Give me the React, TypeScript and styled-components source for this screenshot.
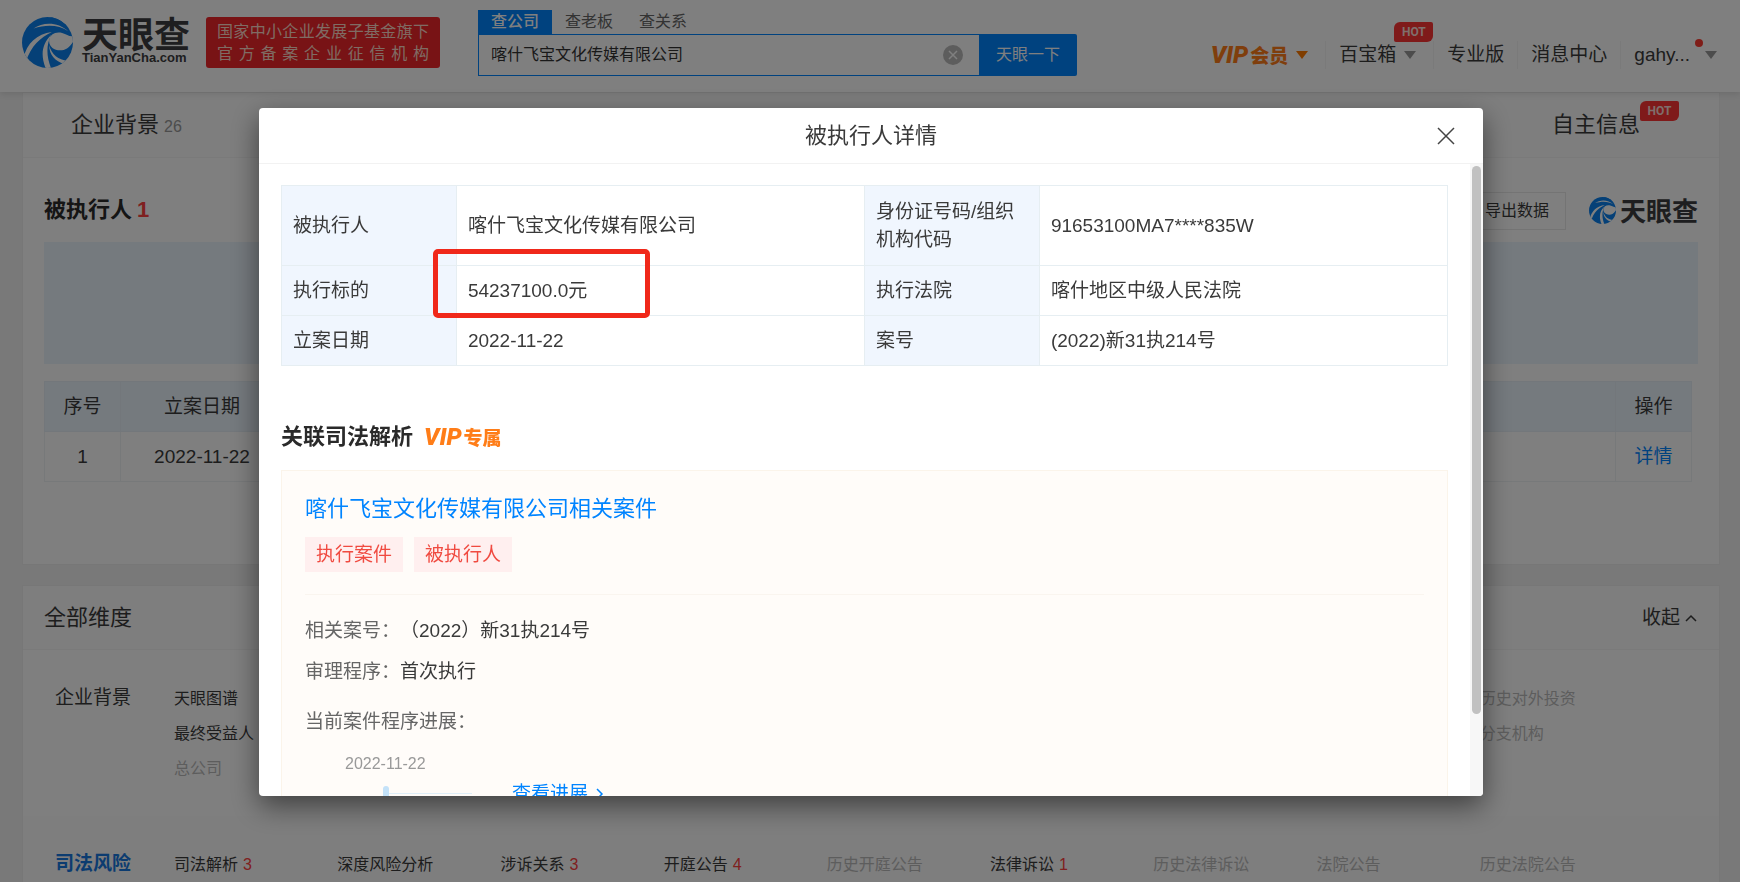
import React from "react";
import styled, { createGlobalStyle, css } from "styled-components";

const GlobalStyle = createGlobalStyle`
  * { box-sizing: border-box; }
  html, body, #root { height: 100%; }
  body {
    margin: 0;
    overflow: hidden;
    background: #f2f2f2;
    color: #3a3a3a;
    font: 19px/28px "Liberation Sans", "Noto Sans CJK SC", sans-serif;
  }
  a { color: inherit; text-decoration: none; }
  button, input { font: inherit; color: inherit; }
  h1, h2, h3, p, ul, dl, dd { margin: 0; padding: 0; font-weight: inherit; font-size: inherit; }
  ul { list-style: none; }
`;

/* ---------- header ---------- */

const Header = styled.header`
  position: relative;
  display: flex;
  align-items: flex-start;
  height: 92px;
  padding: 0 19px 0 22px;
  background: #fff;
  box-shadow: 0 2px 6px rgba(0, 0, 0, 0.1);
`;

const Brand = styled.a`
  display: flex;
  gap: 9px;
  padding-top: 17px;
`;

const BrandText = styled.span`
  display: flex;
  flex-direction: column;
  color: #3c3c40;
`;

const WordMark = styled.span<{ $small?: boolean }>`
  font-family: "Noto Sans CJK SC", sans-serif;
  font-weight: 700;
  color: #3c3c40;
  font-size: ${(p) => (p.$small ? 26 : 36)}px;
  line-height: ${(p) => (p.$small ? 26 : 31)}px;
`;

const Domain = styled.span`
  font-size: 13px;
  font-weight: 700;
  line-height: 20px;
`;

const Banner = styled.div`
  width: 234px;
  height: 51px;
  margin: 17px 0 0 16px;
  padding: 4px 11px;
  border-radius: 3px;
  background: #f0262b;
  color: #ffd8c8;
  font-size: 16px;
  line-height: 22px;
`;

const BannerLine = styled.div`
  text-align: justify;
  text-align-last: justify;
  text-justify: inter-character;
  white-space: nowrap;
`;

const Search = styled.form`
  margin: 10px 0 0 38px;
  width: 599px;
  font-size: 16px;
`;

const SearchTabs = styled.div`
  display: flex;
`;

const SearchTab = styled.button<{ $active?: boolean }>`
  height: 24px;
  padding: 0 13px;
  border: 0;
  background: ${(p) => (p.$active ? "#0084ff" : "transparent")};
  color: ${(p) => (p.$active ? "#fff" : "#666")};
  font-weight: ${(p) => (p.$active ? 500 : 400)};
  line-height: 24px;
`;

const SearchBar = styled.div`
  display: flex;
  height: 42px;
`;

const SearchField = styled.label`
  display: flex;
  flex: 1;
  align-items: center;
  padding: 0 16px 0 12px;
  border: 1px solid #0084ff;
  border-right: 0;
`;

const SearchInput = styled.input`
  flex: 1;
  min-width: 0;
  padding: 0;
  border: 0;
  outline: 0;
  background: transparent;
  color: #333;
`;

const ClearButton = styled.button`
  display: flex;
  padding: 0;
  border: 0;
  background: transparent;
`;

const SearchSubmit = styled.button`
  width: 98px;
  padding: 0;
  border: 0;
  border-radius: 0 2px 2px 0;
  background: #0084ff;
  color: #fff;
`;

const Nav = styled.nav`
  display: flex;
  align-items: center;
  margin: 41px 0 0 auto;
`;

const NavItem = styled.a`
  position: relative;
  display: flex;
  align-items: center;
  padding: 0 13px;
  white-space: nowrap;
  & + & { border-left: 1px solid #f4f4f4; }
  &:last-child { padding-right: 0; }
  line-height: 28px;
`;

const UserName = styled.span`
  margin-right: 7px;
`;

const Caret = styled.i<{ $orange?: boolean }>`
  margin: 0 4px 0 8px;
  border: 6px solid transparent;
  border-top: 8px solid ${(p) => (p.$orange ? "#ff7a00" : "#999")};
  border-bottom: 0;
`;

const Vip = styled.span`
  display: inline-flex;
  align-items: baseline;
  gap: 2px;
  color: #ff7d18;
  font: 900 19px/28px "Noto Sans CJK SC", sans-serif;
`;

const VipLatin = styled.span`
  font: italic 900 24px/28px Roboto, sans-serif;
`;

const HotBadge = styled.span`
  position: absolute;
  left: 100%;
  top: -10px;
  width: 39px;
  height: 20px;
  border-radius: 6px 2px 6px 2px;
  background: #ff3535;
  color: #ffdcd8;
  font: 700 12px/20px Roboto, sans-serif;
  text-align: center;
`;

const NavHot = styled(HotBadge)`
  left: auto;
  right: 0;
  top: -19px;
`;

const UserDot = styled.i`
  position: absolute;
  right: 18px;
  top: -2px;
  width: 8px;
  height: 8px;
  border-radius: 50%;
  background: #ff3b30;
`;

/* ---------- page ---------- */

const Card = styled.section`
  margin: 0 20px 20px 22px;
  border: 1px solid #efefef;
  background: #fff;
`;

const TabStrip = styled.div`
  display: flex;
  justify-content: space-between;
  height: 65px;
  padding: 18px 79px 0 48px;
  border-bottom: 1px solid #f5f5f5;
  background: #fcfcfc;
  font-size: 22px;
`;

const StripTab = styled.a`
  position: relative;
`;

const Muted = styled.span`
  margin-left: 5px;
  color: #999;
  font-size: 16px;
`;

const RiskBlock = styled.div`
  padding: 32px 21px 82px;
`;

const BlockHead = styled.div`
  display: flex;
  align-items: center;
  height: 40px;
`;

const BlockTitle = styled.h2`
  font-size: 22px;
  font-weight: 700;
  color: #2a2a2a;
`;

const Count = styled.span`
  margin-left: 5px;
  color: #ff4040;
`;

const ExportButton = styled.button`
  align-self: flex-end;
  height: 38px;
  margin-left: auto;
  padding: 0 16px;
  border: 1px solid #e8e8e8;
  background: #fff;
  font-size: 16px;
`;

const SmallBrand = styled.span`
  display: flex;
  align-items: center;
  gap: 4px;
  margin-left: 23px;
`;

const Filler = styled.div`
  height: 122px;
  margin: 12px 0 17px;
  background: #ebf4fc;
`;

const ListTable = styled.table`
  width: calc(100% - 6px);
  border-collapse: collapse;
  table-layout: fixed;
  th, td {
    height: 50px;
    padding: 0;
    border: 1px solid #eff2f4;
    font-weight: 400;
    text-align: center;
  }
  th { background: #ebf4fc; border-color: #e6eff6; }
`;

const Link = styled.a`
  color: #0084ff;
`;

const DimHead = styled.div`
  display: flex;
  align-items: center;
  justify-content: space-between;
  height: 64px;
  padding: 0 22px 0 21px;
  border-bottom: 1px solid #f5f5f5;
  background: #fcfcfc;
`;

const DimTitle = styled.h2`
  font-size: 22px;
`;

const CollapseButton = styled.button`
  display: flex;
  align-items: center;
  gap: 5px;
  padding: 0;
  border: 0;
  background: transparent;
`;

const DimGroup = styled.div<{ $shade?: boolean }>`
  display: flex;
  padding: 30px 0;
  min-height: 166px;
  background: ${(p) => (p.$shade ? "#fcfcfc" : "#fff")};
`;

const DimName = styled.h3<{ $active?: boolean }>`
  width: 151px;
  padding-left: 32px;
  line-height: 36px;
  ${(p) =>
    p.$active &&
    css`
      color: #1879e0;
      font-weight: 700;
    `}
`;

const DimGrid = styled.ul`
  display: grid;
  flex: 1;
  grid-template-columns: repeat(9, 163fr) 76fr;
  grid-auto-rows: 35px;
  font-size: 16px;
  line-height: 38px;
  white-space: nowrap;
`;

const DimItem = styled.li<{ $col: number; $off?: boolean }>`
  grid-column: ${(p) => p.$col};
  color: ${(p) => (p.$off ? "#bbb" : "#3a3a3a")};
`;

/* ---------- dialog ---------- */

const Overlay = styled.div`
  position: fixed;
  inset: 0;
  display: flex;
  align-items: flex-start;
  justify-content: center;
  padding: 108px 0 0 2px;
  background: rgba(0, 0, 0, 0.5);
`;

const Dialog = styled.section`
  display: flex;
  flex-direction: column;
  width: 1224px;
  max-width: 92vw;
  height: 78vh;
  border-radius: 4px;
  overflow: hidden;
  background: #fff;
  box-shadow: 0 10px 28px rgba(0, 0, 0, 0.5);
`;

const DialogHead = styled.header`
  display: grid;
  flex: none;
  grid-template-columns: 1fr auto 1fr;
  align-items: center;
  height: 56px;
  padding: 0 28px;
  border-bottom: 1px solid #f2f2f2;
`;

const DialogTitle = styled.h1`
  grid-column: 2;
  font-size: 22px;
`;

const CloseButton = styled.button`
  display: flex;
  justify-self: end;
  padding: 0;
  border: 0;
  background: transparent;
`;

const DialogMain = styled.div`
  display: flex;
  flex: 1;
  min-height: 0;
`;

const DialogBody = styled.div`
  flex: 1;
  overflow: hidden;
  padding: 21px 22px 0;
`;

const ScrollTrack = styled.div`
  width: 13px;
  padding: 2px 2px 0;
  background: #f7f7f7;
`;

const ScrollThumb = styled.div`
  height: 87%;
  border-radius: 5px;
  background: #c1c1c1;
`;

const DetailWrap = styled.div`
  position: relative;
`;

const DetailTable = styled.table`
  width: 100%;
  border-collapse: collapse;
  table-layout: fixed;
  th, td {
    height: 50px;
    padding: 0 11px;
    border: 1px solid #e6eef2;
    font-weight: 400;
    text-align: left;
  }
  th {
    width: 15%;
    background: #f0f6fe;
  }
  tr:first-child > * { height: 80px; }
`;

const Highlight = styled.div`
  position: absolute;
  left: 152px;
  top: 64px;
  width: 217px;
  height: 69px;
  border: 5px solid #f0281a;
  border-radius: 5px;
`;

const RelatedHead = styled.div`
  display: flex;
  align-items: center;
  gap: 11px;
  margin: 57px 0 19px;
`;

const CaseCard = styled.article`
  padding: 24px 23px;
  border: 1px solid #fbf4ea;
  background: #fffcf9;
`;

const CaseTitle = styled.a`
  display: block;
  color: #0084ff;
  font-size: 22px;
`;

const Tags = styled.div`
  display: flex;
  gap: 11px;
  padding: 14px 0 22px;
  border-bottom: 1px solid #faf5ef;
`;

const Tag = styled.span`
  padding: 0 11px;
  background: #ffefef;
  color: #f04a40;
  line-height: 35px;
`;

const Facts = styled.dl`
  display: grid;
  grid-template-columns: auto 1fr;
  grid-auto-rows: 41px;
  padding-top: 15px;
  line-height: 41px;
`;

const Term = styled.dt`
  color: #666;
`;

const ProgressLabel = styled.p`
  margin-top: 16px;
  color: #666;
`;

const Timeline = styled.div`
  display: flex;
  gap: 40px;
  margin: 18px 0 0 40px;
`;

const Step = styled.div`
  width: 127px;
  color: #999;
  font-size: 16px;
  line-height: 20px;
`;

const Rail = styled.div`
  display: flex;
  align-items: center;
  margin: 12px 0 0 38px;
  &::before {
    content: "";
    width: 6px;
    height: 14px;
    border-radius: 3px;
    background: #c4e2f9;
  }
  &::after {
    content: "";
    flex: 1;
    height: 1px;
    background: #e0eff9;
  }
`;

const ProgressLink = styled.a`
  display: flex;
  align-items: center;
  gap: 6px;
  margin-top: 26px;
  color: #0084ff;
`;

const LogoMark = ({ size }: { size: number }) => (
  <svg width={size} height={size} viewBox="0 0 150 150" aria-hidden="true">
    <defs>
      <clipPath id={`disc${size}`}>
        <circle cx="75" cy="75" r="75" />
      </clipPath>
    </defs>
    <g clipPath={`url(#disc${size})`}>
      <rect width="150" height="150" fill="#0a80ee" />
      <path d="M152 56C140 60 132 50 118 47C98 42 82 52 80 68C78 86 94 98 112 98C128 98 140 90 152 70Z" fill="#fff" />
      <path d="M36 32C64 8 108 8 138 34C146 42 150 50 152 60L160 40L120 -10C100 -4 60 4 36 32Z" fill="#0a80ee" />
      <path d="M34 34C62 14 106 14 136 42C108 22 70 22 34 34Z" fill="#fff" />
      <path d="M4 122C14 76 44 50 88 44C54 60 26 86 12 130Z" fill="#fff" />
      <path d="M70 152C54 112 58 80 86 52C70 84 72 118 86 152Z" fill="#fff" />
      <path d="M80 82C86 110 108 126 134 128L124 138C98 130 80 112 80 82Z" fill="#fff" />
    </g>
  </svg>
);

const ChevronIcon = ({ up }: { up?: boolean }) => (
  <svg width="12" height="12" viewBox="0 0 12 12" fill="none" stroke="currentColor" strokeWidth="1.5" aria-hidden="true">
    <path d={up ? "M1 9L6 4L11 9" : "M3 1L8 6L3 11"} />
  </svg>
);

type Dim = { label: string; col: number; count?: number; off?: boolean };

const background: Dim[] = [
  { label: "天眼图谱", col: 1 },
  { label: "历史对外投资", col: 9, off: true },
  { label: "最终受益人", col: 1 },
  { label: "分支机构", col: 9, off: true },
  { label: "总公司", col: 1, off: true },
];

const judicial: Dim[] = [
  { label: "司法解析", col: 1, count: 3 },
  { label: "深度风险分析", col: 2 },
  { label: "涉诉关系", col: 3, count: 3 },
  { label: "开庭公告", col: 4, count: 4 },
  { label: "历史开庭公告", col: 5, off: true },
  { label: "法律诉讼", col: 6, count: 1 },
  { label: "历史法律诉讼", col: 7, off: true },
  { label: "法院公告", col: 8, off: true },
  { label: "历史法院公告", col: 9, off: true },
];

const Dimensions = ({ items }: { items: Dim[] }) => (
  <DimGrid>
    {items.map((d) => (
      <DimItem key={d.label} $col={d.col} $off={d.off}>
        <a href="#">{d.label}</a>
        {d.count !== undefined && <Count>{d.count}</Count>}
      </DimItem>
    ))}
  </DimGrid>
);

const details = [
  ["被执行人", "喀什飞宝文化传媒有限公司", "身份证号码/组织机构代码", "91653100MA7****835W"],
  ["执行标的", "54237100.0元", "执行法院", "喀什地区中级人民法院"],
  ["立案日期", "2022-11-22", "案号", "(2022)新31执214号"],
];

export default function App() {
  return (
    <div lang="zh-CN">
      <GlobalStyle />
      <Header>
        <Brand href="#">
          <LogoMark size={51} />
          <BrandText>
            <WordMark>天眼查</WordMark>
            <Domain>TianYanCha.com</Domain>
          </BrandText>
        </Brand>
        <Banner>
          <BannerLine>国家中小企业发展子基金旗下</BannerLine>
          <BannerLine>官方备案企业征信机构</BannerLine>
        </Banner>
        <Search onSubmit={(e) => e.preventDefault()}>
          <SearchTabs>
            <SearchTab type="button" $active>查公司</SearchTab>
            <SearchTab type="button">查老板</SearchTab>
            <SearchTab type="button">查关系</SearchTab>
          </SearchTabs>
          <SearchBar>
            <SearchField>
              <SearchInput aria-label="查公司" defaultValue="喀什飞宝文化传媒有限公司" />
              <ClearButton type="button" aria-label="清除">
                <svg width="20" height="20" viewBox="0 0 20 20" aria-hidden="true">
                  <circle cx="10" cy="10" r="10" fill="#bbb" />
                  <path d="M6 6L14 14M14 6L6 14" stroke="#fff" strokeWidth="1.5" />
                </svg>
              </ClearButton>
            </SearchField>
            <SearchSubmit type="submit">天眼一下</SearchSubmit>
          </SearchBar>
        </Search>
        <Nav>
          <NavItem href="#">
            <Vip><VipLatin>VIP</VipLatin>会员</Vip>
            <Caret $orange />
          </NavItem>
          <NavItem href="#">
            百宝箱
            <Caret />
            <NavHot>HOT</NavHot>
          </NavItem>
          <NavItem href="#">专业版</NavItem>
          <NavItem href="#">消息中心</NavItem>
          <NavItem href="#">
            <UserName>gahy...</UserName>
            <UserDot />
            <Caret />
          </NavItem>
        </Nav>
      </Header>

      <main>
        <Card>
          <TabStrip>
            <StripTab href="#">企业背景<Muted>26</Muted></StripTab>
            <StripTab href="#">自主信息<HotBadge>HOT</HotBadge></StripTab>
          </TabStrip>
          <RiskBlock>
            <BlockHead>
              <BlockTitle>被执行人<Count>1</Count></BlockTitle>
              <ExportButton>导出数据</ExportButton>
              <SmallBrand>
                <LogoMark size={27} />
                <WordMark $small>天眼查</WordMark>
              </SmallBrand>
            </BlockHead>
            <Filler />
            <ListTable>
              <colgroup>
                <col width="76" />
                <col width="163" />
                <col />
                <col width="76" />
              </colgroup>
              <thead>
                <tr><th>序号</th><th>立案日期</th><th /><th>操作</th></tr>
              </thead>
              <tbody>
                <tr><td>1</td><td>2022-11-22</td><td /><td><Link href="#">详情</Link></td></tr>
              </tbody>
            </ListTable>
          </RiskBlock>
        </Card>

        <Card>
          <DimHead>
            <DimTitle>全部维度</DimTitle>
            <CollapseButton>收起<ChevronIcon up /></CollapseButton>
          </DimHead>
          <DimGroup>
            <DimName>企业背景</DimName>
            <Dimensions items={background} />
          </DimGroup>
          <DimGroup $shade>
            <DimName $active>司法风险</DimName>
            <Dimensions items={judicial} />
          </DimGroup>
        </Card>
      </main>

      <Overlay>
        <Dialog role="dialog" aria-modal="true" aria-labelledby="detail-title">
          <DialogHead>
            <DialogTitle id="detail-title">被执行人详情</DialogTitle>
            <CloseButton aria-label="关闭">
              <svg width="18" height="18" viewBox="0 0 18 18" stroke="#444" strokeWidth="1.5" aria-hidden="true">
                <path d="M1 1L17 17M17 1L1 17" />
              </svg>
            </CloseButton>
          </DialogHead>
          <DialogMain>
            <DialogBody>
              <DetailWrap>
                <DetailTable>
                  <tbody>
                    {details.map(([a, b, c, d]) => (
                      <tr key={a}>
                        <th scope="row">{a}</th>
                        <td>{b}</td>
                        <th scope="row">{c}</th>
                        <td>{d}</td>
                      </tr>
                    ))}
                  </tbody>
                </DetailTable>
                <Highlight />
              </DetailWrap>
              <RelatedHead>
                <BlockTitle>关联司法解析</BlockTitle>
                <Vip><VipLatin>VIP</VipLatin>专属</Vip>
              </RelatedHead>
              <CaseCard>
                <CaseTitle href="#">喀什飞宝文化传媒有限公司相关案件</CaseTitle>
                <Tags>
                  <Tag>执行案件</Tag>
                  <Tag>被执行人</Tag>
                </Tags>
                <Facts>
                  <Term>相关案号：</Term>
                  <dd>（2022）新31执214号</dd>
                  <Term>审理程序：</Term>
                  <dd>首次执行</dd>
                </Facts>
                <ProgressLabel>当前案件程序进展：</ProgressLabel>
                <Timeline>
                  <Step>
                    2022-11-22
                    <Rail />
                  </Step>
                  <ProgressLink href="#">查看进展<ChevronIcon /></ProgressLink>
                </Timeline>
              </CaseCard>
            </DialogBody>
            <ScrollTrack>
              <ScrollThumb />
            </ScrollTrack>
          </DialogMain>
        </Dialog>
      </Overlay>
    </div>
  );
}
